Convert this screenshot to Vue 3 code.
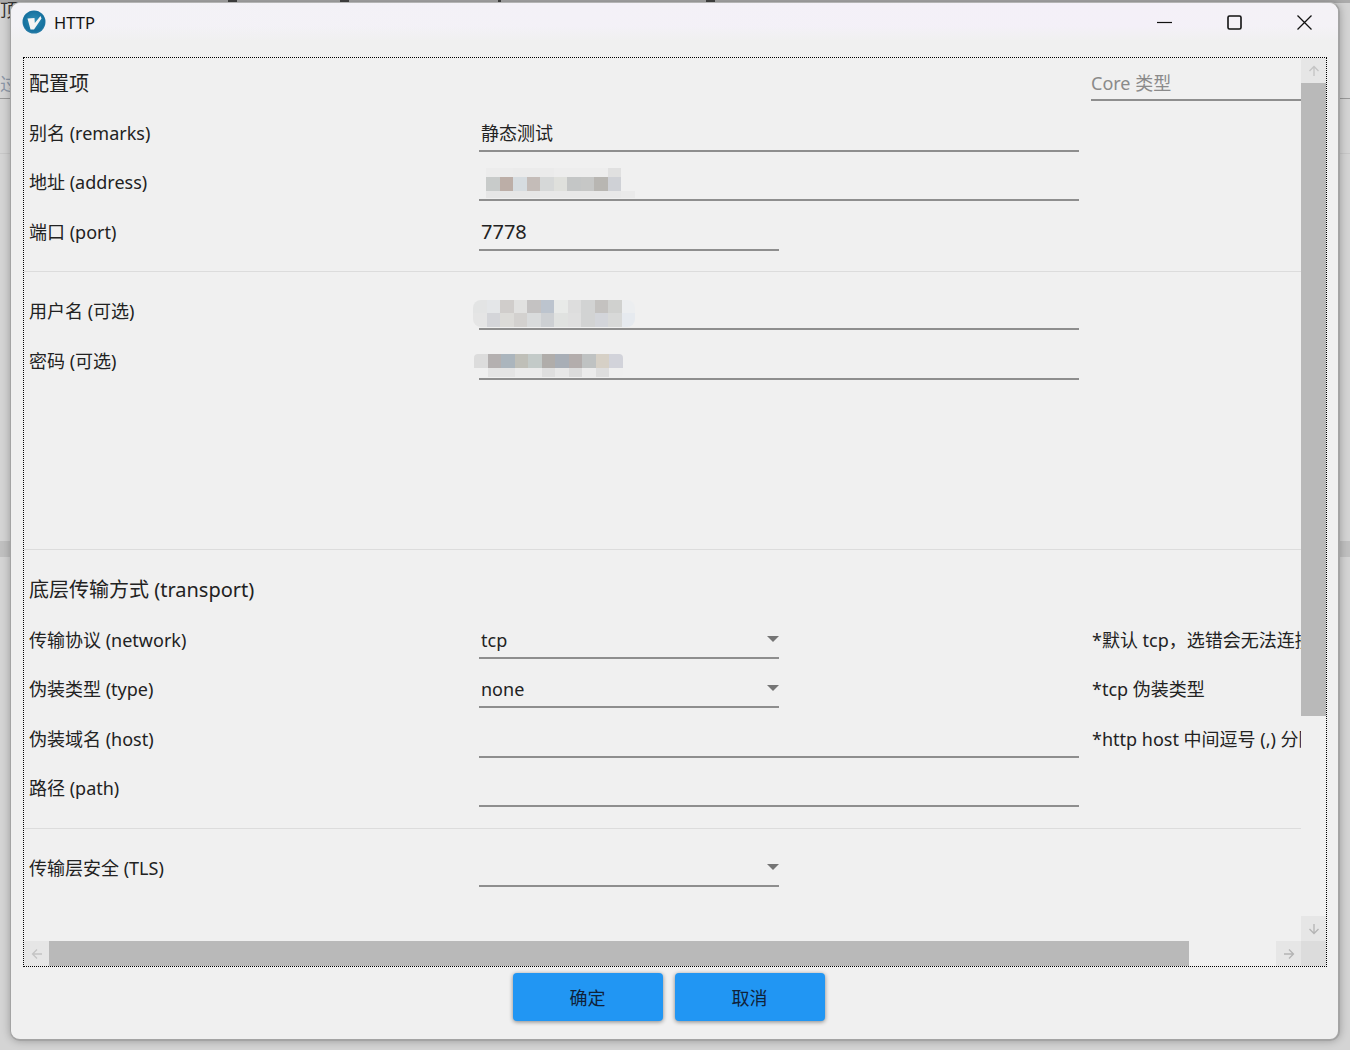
<template>
  <div class="desktop">
    <div class="behind-top">
      <i class="speck s1"></i>
      <i class="speck s2"></i>
      <i class="speck s3"></i>
      <i class="speck s4"></i>
    </div>
    <div class="behind-line l1"></div>
    <div class="behind-line l2"></div>
    <div class="behind-band"></div>
    <div class="behind-text one">顶</div>
    <div class="behind-text two">过</div>

    <div class="window">
      <div class="titlebar">
        <svg class="app-icon" width="24" height="24" viewBox="0 0 24 24">
          <defs>
            <radialGradient id="logo" cx="50%" cy="45%" r="55%">
              <stop offset="0%" stop-color="#2f8fb8" />
              <stop offset="80%" stop-color="#16719f" />
              <stop offset="100%" stop-color="#2a7ea8" />
            </radialGradient>
          </defs>
          <circle cx="12" cy="12" r="11.500" fill="url(#logo)" />
          <path d="M5.500 8.500 L12.500 8 L12.800 13 L18.500 6 L19.500 8.500 L12 19.500 L8.500 19.500 Z" fill="#f4f4f4" />
        </svg>
        <span class="title">HTTP</span>
        <div class="win-controls">
          <svg width="15" height="15" viewBox="0 0 15 15"><path d="M0 7.500H15" stroke="#111" stroke-width="1.200" /></svg>
          <svg width="15" height="15" viewBox="0 0 15 15"><rect x="1" y="1" width="13" height="13" rx="1.500" fill="none" stroke="#111" stroke-width="1.600" /></svg>
          <svg width="15" height="15" viewBox="0 0 15 15"><path d="M0.500 0.500L14.500 14.500M14.500 0.500L0.500 14.500" stroke="#111" stroke-width="1.300" /></svg>
        </div>
      </div>

      <div class="scroll-frame">
        <div class="form-area">
          <template v-for="(row, index) in rows" :key="index">
            <div v-if="row.divider" class="divider" :style="{ marginTop: row.top + 'px', marginBottom: row.bottom + 'px' }"></div>
            <div v-else class="row" :class="row.cls">
              <div class="label">{{ row.label }}</div>
              <div class="field-cell">
                <div v-if="row.field" class="field" :class="row.field">
                  <span class="value" :class="{ digits: row.digits }">{{ row.value }}</span>
                  <span v-if="row.select" class="caret"></span>
                  <div v-if="row.blur" class="blur-box" :class="row.blur">
                    <div v-for="(strip, s) in row.strips" :key="s" class="strip" :style="{ height: strip.h + 'px' }">
                      <i v-for="(c, i) in strip.cells" :key="i" :style="{ background: c }"></i>
                    </div>
                  </div>
                </div>
              </div>
              <div v-if="row.note" class="note">{{ row.note }}</div>
              <div v-if="row.core" class="core-type">{{ row.core }}</div>
            </div>
          </template>
        </div>

        <div class="vbar">
          <div class="sb-btn">
            <svg width="12" height="12" viewBox="0 0 12 12"><path d="M6 11V1.500M1.500 6L6 1.500L10.500 6" fill="none" stroke="#c4c4c4" stroke-width="1.300" /></svg>
          </div>
          <div class="vthumb"></div>
          <div class="vtrack"></div>
          <div class="sb-btn">
            <svg width="12" height="12" viewBox="0 0 12 12"><path d="M6 1V10.500M1.500 6L6 10.500L10.500 6" fill="none" stroke="#b4b4b4" stroke-width="1.300" /></svg>
          </div>
        </div>

        <div class="hbar">
          <div class="sb-btn">
            <svg width="12" height="12" viewBox="0 0 12 12"><path d="M11 6H1.500M6 1.500L1.500 6L6 10.500" fill="none" stroke="#c4c4c4" stroke-width="1.300" /></svg>
          </div>
          <div class="hthumb"></div>
          <div class="htrack"></div>
          <div class="sb-btn">
            <svg width="12" height="12" viewBox="0 0 12 12"><path d="M1 6H10.500M6 1.500L10.500 6L6 10.500" fill="none" stroke="#b4b4b4" stroke-width="1.300" /></svg>
          </div>
        </div>
        <div class="corner"></div>
      </div>

      <div class="actions">
        <button class="btn">确定</button>
        <button class="btn">取消</button>
      </div>
    </div>
  </div>
</template>

<script setup>
// pixelated strips standing in for the hidden values
const addrStrips = [
  { h: 9, cells: ['#ececec', '#ececec', '#ebebeb', '#ebebeb', '#ebebeb', '#ededed', '#ededed', '#ededed', '#ededed', '#e0e0e0'] },
  { h: 14, cells: ['#c8cbca', '#bcaea7', '#d6dce0', '#c4bcb8', '#d6d8d8', '#dfe0dc', '#c4c6c6', '#c6c7c6', '#b8b6b2', '#cfd1d6'] },
  { h: 7, cells: ['#e6e6e6', '#e6e6e6', '#e6e6e6', '#e6e6e6', '#e8e8e8', '#e8e8e8', '#e8e8e8', '#e8e8e8', '#e8e8e8', '#e8e8e8', '#eaeaea'] }
]
const userStrips = [
  { h: 13, cells: ['#e3e4e4', '#e4e6e8', '#d0cdcb', '#e1e1e0', '#c4c2c2', '#bcc4ce', '#e8eae8', '#dddddd', '#d2d3d3', '#c4c2c0', '#d0d1cf', '#eceef0'] },
  { h: 14, cells: ['#e5e5e5', '#d4d5d9', '#dcdbd8', '#d3d1cf', '#d9dbdc', '#cdd0d3', '#e0e2e0', '#dfdfdf', '#d2d3d3', '#d3d5da', '#d8d9d8', '#e6eaef'] }
]
const passStrips = [
  { h: 14, cells: ['#dcdcdc', '#b4b0b0', '#abb5bd', '#bfbfb8', '#c3cac8', '#b0adaa', '#a8aeb6', '#b3adac', '#bfc2c2', '#d6d0c6', '#d2d3da'] },
  { h: 9, cells: ['#f0f0f0', '#e4e4e4', '#e4e4e4', '#ebebeb', '#ebebeb', '#dfdfdf', '#e8e8e8', '#dcdcdc', '#ececec', '#dedede', '#efefef'] }
]

const rows = [
  { label: '配置项', cls: 'heading h-first', core: 'Core 类型' },
  { label: '别名 (remarks)', cls: 'short', field: 'wide', value: '静态测试' },
  { label: '地址 (address)', cls: 'tall', field: 'wide', value: '', blur: 'b-addr', strips: addrStrips },
  { label: '端口 (port)', field: 'narrow', value: '7778', digits: true },
  { divider: true, top: 14, bottom: 14 },
  { label: '用户名 (可选)', cls: 'tall', field: 'wide', value: '', blur: 'b-user', strips: userStrips },
  { label: '密码 (可选)', field: 'wide', value: '', blur: 'b-pass', strips: passStrips },
  { divider: true, top: 163.5, bottom: 14 },
  { label: '底层传输方式 (transport)', cls: 'heading' },
  { label: '传输协议 (network)', field: 'narrow', value: 'tcp', select: true, note: '*默认 tcp\uFF0C选错会无法连接' },
  { label: '伪装类型 (type)', field: 'narrow', value: 'none', select: true, note: '*tcp 伪装类型' },
  { label: '伪装域名 (host)', field: 'wide', value: '', note: '*http host 中间逗号 (,) 分隔' },
  { label: '路径 (path)', field: 'wide', value: '' },
  { divider: true, top: 15, bottom: 14 },
  { label: '传输层安全 (TLS)', field: 'narrow', value: '', select: true }
]
</script>

<style scoped>
.desktop {
  position: relative;
  width: 1350px;
  height: 1050px;
  overflow: hidden;
  background: #d4d4d4;
  font-family: "Noto Sans", "Noto Sans CJK SC", sans-serif;
}

.behind-top {
  position: absolute;
  left: 0;
  right: 0;
  top: 0;
  height: 3px;
  background: #ababab;
}

.speck {
  position: absolute;
  top: 0;
  width: 9px;
  height: 2px;
  background: #444;
}

.s1 { left: 228px; }
.s2 { left: 340px; }
.s3 { left: 498px; width: 3px; }
.s4 { left: 706px; }

.behind-line {
  position: absolute;
  left: 0;
  right: 0;
  height: 1px;
}

.l1 { top: 98px; background: #9a9a9a; }
.l2 { top: 153px; background: #c8c8c8; }

.behind-band {
  position: absolute;
  left: 0;
  right: 0;
  top: 541px;
  height: 16px;
  background: #c0c0c0;
}

.behind-text {
  position: absolute;
  left: 0;
  font-size: 18px;
  color: #333;
}

.behind-text.one { top: -4px; }
.behind-text.two { top: 70px; color: #8d98a8; }

.window {
  position: relative;
  z-index: 1;
  box-sizing: border-box;
  width: 1330px;
  height: 1039px;
  margin-left: 10px;
  top: 2px;
  background: #f0f0f0;
  border-radius: 10px;
  border: 1px solid #a4a4a4;
  border-top-color: #b4b4b4;
  border-right-width: 2px;
  border-bottom-width: 2px;
  box-shadow: 0 0 9px rgba(0, 0, 0, 0.28);
  display: flex;
  flex-direction: column;
}

.titlebar {
  height: 38px;
  flex-shrink: 0;
  display: flex;
  align-items: center;
  padding-left: 11px;
  border-radius: 9px 9px 0 0;
  background:
    linear-gradient(to bottom, rgba(240, 240, 240, 0) 60%, #f0f0f0 100%),
    linear-gradient(90deg, #f3f2f6 0%, #f4f0f8 85%, #f4f2f6 100%);
}

.app-icon {
  flex-shrink: 0;
}

.title {
  margin-left: 8px;
  font-size: 16.500px;
  color: #111;
}

.win-controls {
  margin-left: auto;
  display: flex;
  gap: 55px;
  padding-right: 26px;
}

.scroll-frame {
  position: relative;
  box-sizing: border-box;
  flex-shrink: 0;
  width: 1304px;
  height: 910px;
  margin: 16px 0 0 12px;
  border: 1px dotted #000;
  overflow: hidden;
}

.form-area {
  width: 1277px;
  height: 883px;
  overflow: hidden;
  padding-top: 1px;
  box-sizing: border-box;
}

.row {
  display: grid;
  grid-template-columns: 455px 600px 222px;
  height: 49.500px;
  font-size: 18px;
  color: #222;
}

.row.short {
  height: 49px;
}

.row.tall {
  height: 50px;
}

.row.heading {
  height: 51px;
}

.row.h-first {
  height: 49px;
}

.label {
  padding-left: 5px;
  line-height: 50px;
  white-space: nowrap;
}

.heading .label {
  font-size: 20px;
  line-height: 51px;
}

.h-first .label {
  line-height: 49px;
}

.field {
  position: relative;
  box-sizing: border-box;
  height: 44px;
  border-bottom: 2px solid #8e8e8e;
  padding-left: 2px;
  line-height: 50px;
}

.field.wide { width: 600px; }
.field.narrow { width: 300px; }

.value.digits {
  font-size: 20px;
}

.note,
.core-type {
  grid-column: 3;
  grid-row: 1;
  margin-left: 12px;
  width: 210px;
  overflow: hidden;
  white-space: nowrap;
}

.note {
  padding-left: 1px;
  box-sizing: border-box;
  line-height: 50px;
}

.core-type {
  height: 42px;
  line-height: 48px;
  font-size: 18px;
  color: #8a8a8a;
  box-sizing: border-box;
  border-bottom: 2px solid #8e8e8e;
}

.caret {
  position: absolute;
  right: 0;
  top: 21px;
  width: 0;
  height: 0;
  border-left: 6px solid transparent;
  border-right: 6px solid transparent;
  border-top: 6px solid #757575;
}

.blur-box {
  position: absolute;
  filter: blur(0.6px);
}

.strip {
  display: flex;
  overflow: hidden;
}

.strip i {
  display: block;
  width: 13.500px;
  flex-shrink: 0;
}

.b-addr { left: 7px; top: 11px; }
.b-user { left: -6px; top: 14px; border-radius: 8px; overflow: hidden; }
.b-pass { left: -5px; top: 18px; border-radius: 4px; overflow: hidden; }

.divider {
  width: 1277px;
  height: 1px;
  background: #dcdcdc;
}

.vbar {
  position: absolute;
  right: 0;
  top: 0;
  bottom: 25px;
  width: 25px;
  display: flex;
  flex-direction: column;
}

.vthumb {
  height: 633px;
  background: #b9b9b9;
}

.vtrack {
  flex: 1;
  background: #f0f0f0;
}

.hbar {
  position: absolute;
  left: 0;
  right: 25px;
  bottom: 0;
  height: 25px;
  display: flex;
}

.hthumb {
  width: 1140px;
  background: #b9b9b9;
}

.htrack {
  flex: 1;
  background: #f0f0f0;
}

.sb-btn {
  width: 25px;
  height: 25px;
  flex-shrink: 0;
  display: flex;
  align-items: center;
  justify-content: center;
  background: #e6e6e6;
}

.corner {
  position: absolute;
  right: 0;
  bottom: 0;
  width: 25px;
  height: 25px;
  background: #dcdcdc;
}

.actions {
  display: flex;
  justify-content: center;
  gap: 12px;
  margin-top: 6px;
  margin-right: 12px;
}

.btn {
  width: 150px;
  height: 48px;
  border: none;
  border-radius: 4px;
  background: #2196f3;
  color: #10223a;
  font-family: "Noto Sans CJK SC", sans-serif;
  font-size: 18px;
  box-shadow: 0 1px 4px rgba(0, 0, 0, 0.45);
}
</style>
